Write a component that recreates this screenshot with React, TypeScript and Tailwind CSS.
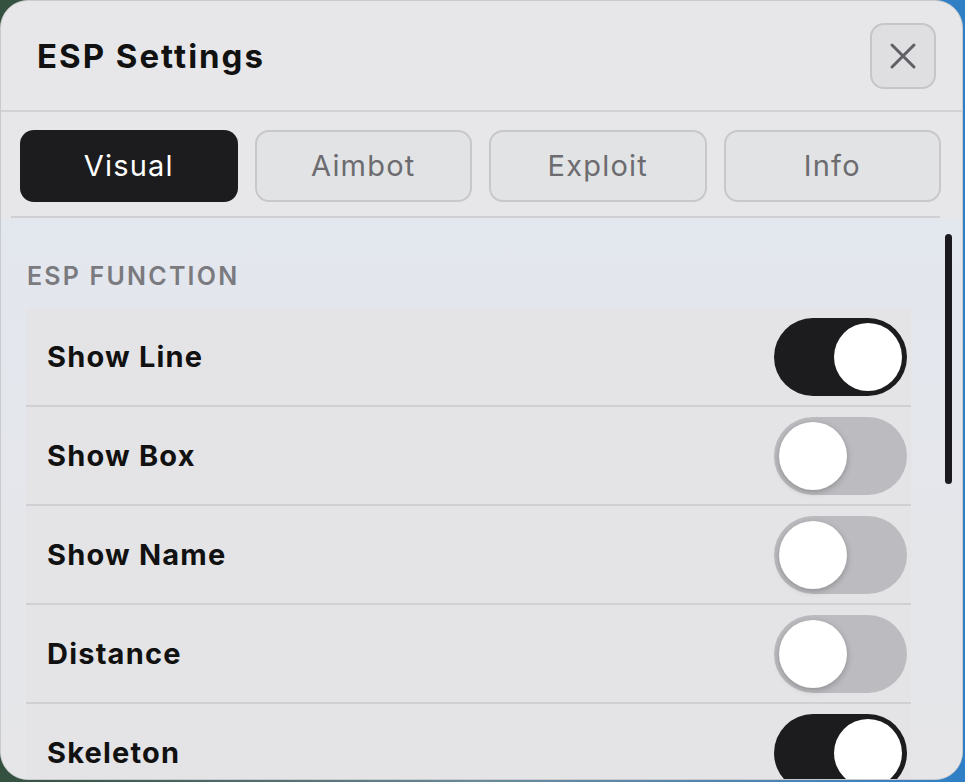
import { useState } from "react";

const TABS = ["Visual", "Aimbot", "Exploit", "Info"];

const ROWS = [
  { label: "Show Line", on: true },
  { label: "Show Box", on: false },
  { label: "Show Name", on: false },
  { label: "Distance", on: false },
  { label: "Skeleton", on: true },
];

function Toggle({ on, onClick }: { on: boolean; onClick: () => void }) {
  return (
    <button
      onClick={onClick}
      className={`relative w-[133px] h-[78px] shrink-0 rounded-full transition-colors ${
        on ? "bg-[#1c1c1e]" : "bg-[#bcbcc0]"
      }`}
    >
      <span
        className={`absolute top-[5px] w-[68px] h-[68px] rounded-full bg-white transition-all ${
          on ? "left-[60px]" : "left-[5px] shadow-[0_2px_6px_rgba(0,0,0,0.25)]"
        }`}
      />
    </button>
  );
}

export default function App() {
  const [tab, setTab] = useState("Visual");
  const [rows, setRows] = useState(ROWS);

  return (
    <div
      className="w-[965px] h-[782px] overflow-hidden bg-gradient-to-r from-[#34503f] via-[#6b8a9a] to-[#2f7fc6]"
      style={{ fontFamily: "Inter, 'Liberation Sans', sans-serif" }}
    >
      <div className="relative w-[963px] h-[780px] rounded-[28px] bg-[#e7e7e9] border border-[#c9cacd] flex flex-col overflow-hidden">
        {/* header */}
        <div className="h-[111px] shrink-0 flex items-center justify-between pl-[36px] pr-[26px] border-b-2 border-[#d2d2d5]">
          <h1 className="text-[33px] font-bold text-[#111] tracking-[2px] mt-[2px]">ESP Settings</h1>
          <button className="w-[66px] h-[66px] rounded-[14px] border-2 border-[#c6c6ca] bg-[#dfdfe2] flex items-center justify-center">
            <svg width="30" height="30" viewBox="0 0 30 30" fill="none" stroke="#5f5f64" strokeWidth="3" strokeLinecap="round">
              <path d="M4 4L26 26M26 4L4 26" />
            </svg>
          </button>
        </div>

        {/* tabs */}
        <div className="shrink-0 grid grid-cols-4 gap-[17px] pl-[19px] pr-[21px] pt-[18px] pb-[14px]">
          {TABS.map((t) => (
            <button
              key={t}
              onClick={() => setTab(t)}
              className={`h-[72px] rounded-[14px] text-[29px] tracking-[1.2px] ${
                tab === t
                  ? "bg-[#1c1c1e] text-white"
                  : "bg-[#e2e3e5] border-2 border-[#c8c8cc] text-[#6c6c70]"
              }`}
            >
              {t}
            </button>
          ))}
        </div>
        <div className="shrink-0 ml-[10px] mr-[22px] h-[2px] bg-[#cfd0d4]" />

        {/* content */}
        <div className="relative flex-1 bg-gradient-to-b from-[#e3e7ee] to-[#e6e6e8] pt-[43px]">
          <p className="pl-[26px] text-[25px] font-semibold text-[#7a7a7f] tracking-[2.2px] leading-[30px] mb-[17px]">ESP FUNCTION</p>
          <div className="ml-[25px] w-[885px] bg-[#e3e3e5]/80">
            {rows.map((r, i) => (
              <div
                key={r.label}
                className="h-[99px] flex items-center justify-between pl-[21px] pr-[4px] border-b-2 border-[#d0d0d4]"
              >
                <span className="text-[29px] font-bold text-[#111] tracking-[1.2px]">{r.label}</span>
                <Toggle
                  on={r.on}
                  onClick={() => setRows(rows.map((x, j) => (j === i ? { ...x, on: !x.on } : x)))}
                />
              </div>
            ))}
          </div>
          {/* scrollbar */}
          <div className="absolute left-[944px] top-[16px] w-[7px] h-[250px] rounded-full bg-[#1b1b1f]" />
        </div>
      </div>
    </div>
  );
}
